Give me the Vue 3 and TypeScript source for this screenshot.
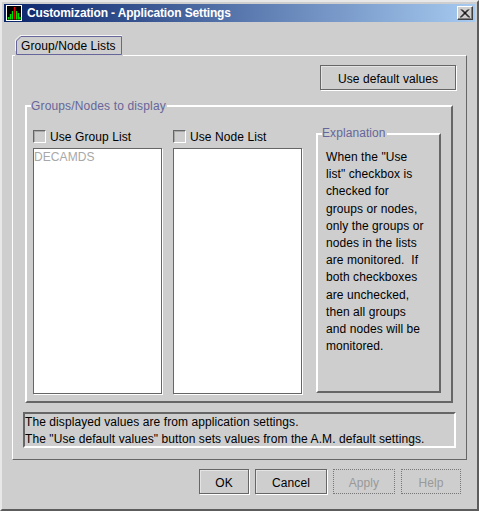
<script setup lang="ts">
const footer: { label: string; disabled: boolean }[] = [
  { label: 'OK', disabled: false },
  { label: 'Cancel', disabled: false },
  { label: 'Apply', disabled: true },
  { label: 'Help', disabled: true },
]
const explanation: string[] = [
  'When the "Use',
  'list" checkbox is',
  'checked for',
  'groups or nodes,',
  'only the groups or',
  'nodes in the lists',
  'are monitored.\u00a0 If',
  'both checkboxes',
  'are unchecked,',
  'then all groups',
  'and nodes will be',
  'monitored.',
]
</script>

<template>
  <div class="window">
    <div class="titlebar">
      <svg class="app-icon" width="16" height="16" viewBox="0 0 16 16">
        <rect x="0.5" y="0.5" width="15" height="15" fill="#000" stroke="#fff" />
        <path d="M2.5 14.5v-2.5M4.5 14.5V9M6.5 14.5V6M10.5 14.5V6M12.5 14.5V8M14 14.5v-2.5" stroke="#00e000" stroke-width="1.4" fill="none" />
        <path d="M8.5 14.5V2" stroke="#e80000" stroke-width="1.4" fill="none" />
      </svg>
      <span class="title">Customization - Application Settings</span>
      <span class="close">
        <svg width="10" height="9" viewBox="0 0 10 9">
          <path d="M1 0.5 L9 8.5 M2 0.5 L10 8.5 M9 0.5 L1 8.5 M8 0.5 L0 8.5" stroke="#000" stroke-width="1" fill="none" />
        </svg>
      </span>
    </div>

    <div class="tabs">
      <div class="tab">
        <svg class="tab-edge" width="108" height="21" viewBox="0 0 108 21">
          <path d="M0.5 16V5 L5 0.5 H107" stroke="#f4f4f4" fill="none" />
          <path d="M1.5 19.5 V6 L6 1.5 H106.5 V19.5 Z" stroke="#66669a" fill="none" />
        </svg>
        Group/Node Lists
      </div>
    </div>

    <div class="panel">
      <div class="top-row">
        <button class="btn default-btn">Use default values</button>
      </div>

      <div class="groups">
        <span class="legend groups-legend">Groups/Nodes to display</span>
        <div class="list-col">
          <label class="check"><span class="box"></span>Use Group List</label>
          <div class="list">DECAMDS</div>
        </div>
        <div class="list-col">
          <label class="check"><span class="box"></span>Use Node List</label>
          <div class="list"></div>
        </div>
        <div class="explain">
          <span class="legend explain-legend">Explanation</span>
          <div v-for="line in explanation" :key="line" class="explain-line">{{ line }}</div>
        </div>
      </div>

      <div class="status">
        <div>The displayed values are from application settings.</div>
        <div>The "Use default values" button sets values from the A.M. default settings.</div>
      </div>
    </div>

    <div class="footer">
      <button
        v-for="b in footer"
        :key="b.label"
        class="btn"
        :class="[`f-${b.label.toLowerCase()}`, { disabled: b.disabled }]"
      >{{ b.label }}</button>
    </div>
  </div>
</template>

<style>
html, body { margin: 0; padding: 0; background: #cecece; }
</style>

<style scoped>
.window {
  box-sizing: border-box;
  width: 479px;
  height: 511px;
  background: #cecece;
  border-style: solid;
  border-width: 2px;
  border-color: #e8e8e8 #5c5c5c #5c5c5c #e8e8e8;
  padding: 2px;
  font: 12px "Liberation Sans", Arial, sans-serif;
  letter-spacing: 0.08px;
  color: #000;
  display: flex;
  flex-direction: column;
  overflow: hidden;
}
.titlebar {
  height: 18px;
  flex: none;
  display: flex;
  align-items: center;
  padding: 0 2px;
  background: linear-gradient(90deg, #0a246a, #a6caf0);
  color: #fff;
}
.app-icon { flex: none; margin-right: 5px; }
.title {
  font: bold 12px "Liberation Sans", sans-serif;
  letter-spacing: -0.14px;
  white-space: nowrap;
  flex: 1;
}
.close {
  box-sizing: border-box;
  width: 16px;
  height: 14px;
  background: #cecece;
  border: 1px solid;
  border-color: #fff #404040 #404040 #fff;
  box-shadow: inset -1px -1px 0 #808080;
  display: flex;
  align-items: center;
  justify-content: center;
}
.tabs {
  display: flex;
  padding: 13px 0 0 11px;
  flex: none;
  height: 20px;
}
.tab {
  box-sizing: border-box;
  width: 108px;
  height: 21px;
  line-height: 23px;
  padding-left: 6px;
  background: #cecece;
  position: relative;
  z-index: 1;
}
.tab-edge { position: absolute; left: 0; top: 0; }
.panel {
  box-sizing: border-box;
  margin: 0 8px;
  width: 455px;
  height: 405px;
  flex: none;
  border: 1px solid;
  border-color: #fff #666 #666 #fff;
  padding: 9px 10px 11px;
  display: flex;
  flex-direction: column;
}
.top-row { display: flex; justify-content: flex-end; height: 26px; flex: none; }
.btn {
  box-sizing: border-box;
  height: 25px;
  padding: 2px 0 0;
  background: #cecece;
  border: 1px solid #666;
  box-shadow: 1px 1px 0 #fff, inset 1px 1px 0 #e4e4e4;
  font: inherit;
  letter-spacing: inherit;
  color: #000;
}
.default-btn { width: 136px; }
.groups {
  box-sizing: border-box;
  margin: 14px 3px 0 2px;
  height: 298px;
  flex: none;
  position: relative;
  border: 2px solid;
  border-color: #fff #666 #666 #fff;
  padding: 23px 13px 7px 6px;
  display: flex;
  gap: 11px;
}
.legend {
  position: absolute;
  background: #cecece;
  color: #66669a;
  padding: 0 1px 0 0;
  line-height: 14px;
  white-space: nowrap;
}
.groups-legend { left: 4px; top: -8px; letter-spacing: 0.15px; }
.list-col { width: 129px; flex: none; display: flex; flex-direction: column; }
.check {
  height: 18px;
  display: flex;
  align-items: flex-start;
  gap: 4px;
  flex: none;
  line-height: 15px;
}
.box {
  box-sizing: border-box;
  width: 13px;
  height: 13px;
  border: 1px solid;
  border-color: #666 #fff #fff #666;
  box-shadow: inset 1px 1px 0 #a8a8a8;
  background: #cecece;
}
.list {
  flex: 1;
  background: #fff;
  border: 1px solid #666;
  box-shadow: 1px 1px 0 #fff;
  padding: 1px 0;
  color: #a8a8a8;
  line-height: 14px;
}
.explain {
  box-sizing: border-box;
  position: relative;
  width: 125px;
  margin: 3px 0 0 3px;
  height: 260px;
  border: 2px solid;
  border-color: #fff #666 #666 #fff;
  padding: 14px 8px 0;
  flex: none;
}
.explain-legend { left: 4px; top: -9px; }
.explain-line { line-height: 17.2px; white-space: nowrap; }
.status {
  box-sizing: border-box;
  margin: 9px 0 0;
  height: 36px;
  flex: none;
  border: 2px solid;
  border-color: #666 #fff #fff #666;
  line-height: 17px;
  white-space: nowrap;
}
.footer {
  display: flex;
  justify-content: flex-end;
  gap: 6px;
  padding: 9px 14px 0 0;
}
.f-ok { width: 50px; }
.f-cancel { width: 72px; }
.f-apply { width: 62px; }
.f-help { width: 60px; }
.btn.disabled {
  color: #999;
  border: 1px dotted #777;
  box-shadow: none;
}
</style>
